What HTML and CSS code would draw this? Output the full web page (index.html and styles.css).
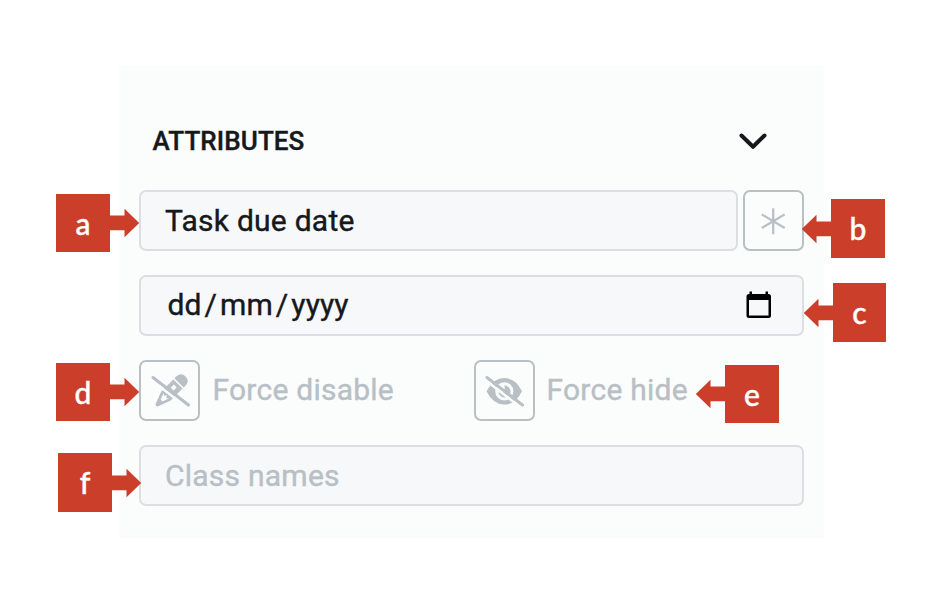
FILE: index.html
```
<!DOCTYPE html>
<html lang="en">
<head>
<meta charset="utf-8">
<title>Attributes</title>
<link rel="stylesheet" href="styles.css">
</head>
<body>
<section class="panel">
  <header class="panel-header">
    <h2>ATTRIBUTES</h2>
    <svg class="chevron" width="30" height="20" viewBox="0 0 30 20"><path d="M3.500 4.500 15 15.800 26.500 4.500"/></svg>
  </header>
  <div class="row label-row">
    <div class="field"><span class="t-label">Task due date</span></div>
    <div class="icon-button">
      <svg width="60" height="60" viewBox="0 0 60 60"><path class="thin" d="M29.200 17.200V43.200M17.800 23.400 40.700 37M40.700 23.400 17.800 37"/></svg>
    </div>
  </div>
  <div class="row">
    <div class="field date-field"><span class="t-date">dd<i>/</i>mm<i>/</i>yyyy</span>
      <svg class="calendar" width="26" height="28" viewBox="0 0 26 28"><path fill-rule="evenodd" d="M3.500 0.500H6V3H19.500V0.500H22V3H22.500Q25 3 25 5.500V24.500Q25 27 22.500 27H3Q.5 27 .5 24.500V5.500Q.5 3 3 3H3.500ZM3 9V24.500H22.500V9Z"/></svg>
    </div>
  </div>
  <div class="row toggles">
    <div class="toggle">
      <div class="icon-button">
        <svg width="60" height="60" viewBox="0 0 60 60">
          <g transform="translate(30.700 30.300) rotate(45)">
            <path class="solid" d="M-6.500-11.800V-14.500Q-6.500-21 0-21T6.500-14.500V-11.800Z"/>
            <path class="solid" fill-rule="evenodd" d="M-6.500-10.300H6.500V7L1.800 19.500Q0 22-1.800 19.500L-6.500 7ZM-2.500-7V-2.500H1.500V-7ZM-3.800 6-1.300 13H1.300L3.800 6 1.800 8 0 5.500-1.800 8Z"/>
          </g>
          <path class="gap" d="M11 18.700 46.800 46.500"/><path class="slash" d="M13 16.500 48.500 44"/>
        </svg>
      </div>
      <span class="t-disable">Force disable</span>
    </div>
    <div class="toggle">
      <div class="icon-button">
        <svg class="eye" width="60" height="60" viewBox="0 0 60 60">
          <path class="solid" fill-rule="evenodd" d="M12.500 30.300Q19 17 30.300 17T48 30.300Q41.600 43.600 30.300 43.600T12.500 30.300ZM30.300 21.200A9.100 9.100 0 1 0 30.300 39.400 9.100 9.100 0 1 0 30.300 21.200Z"/>
          <path class="solid" d="M30 24.500A6 6 0 1 1 24.500 31Q28.500 32.500 30 30 31.500 27 30 24.500Z"/>
          <path class="gap" d="M11 18.700 46.500 46.300"/><path class="slash" d="M13 16.500 48.500 44"/>
        </svg>
      </div>
      <span class="t-hide">Force hide</span>
    </div>
  </div>
  <div class="row"><div class="field muted"><span class="t-class">Class names</span></div></div>
</section>
<div class="callout a"><b>a</b><svg width="30" height="30" viewBox="0 0 30 30"><path d="M0 7.500H14.500V.8L29.200 15 14.500 29.200V22.300H0Z"/></svg></div>
<div class="callout left b"><b>b</b><svg width="30" height="30" viewBox="0 0 30 30"><path d="M0 7.500H14.500V.8L29.200 15 14.500 29.200V22.300H0Z"/></svg></div>
<div class="callout left c"><b>c</b><svg width="30" height="30" viewBox="0 0 30 30"><path d="M0 7.500H14.500V.8L29.200 15 14.500 29.200V22.300H0Z"/></svg></div>
<div class="callout d"><b>d</b><svg width="30" height="30" viewBox="0 0 30 30"><path d="M0 7.500H14.500V.8L29.200 15 14.500 29.200V22.300H0Z"/></svg></div>
<div class="callout left e"><b>e</b><svg width="30" height="30" viewBox="0 0 30 30"><path d="M0 7.500H14.500V.8L29.200 15 14.500 29.200V22.300H0Z"/></svg></div>
<div class="callout f"><b>f</b><svg width="30" height="30" viewBox="0 0 30 30"><path d="M0 7.500H14.500V.8L29.200 15 14.500 29.200V22.300H0Z"/></svg></div>
</body>
</html>
```
FILE: styles.css
```
* { box-sizing: border-box; }
body {
  margin: 0;
  padding: 66px 118px 0 119px;
  height: 616px;
  background: #fff;
  color: #15191c;
  font-family: Roboto, sans-serif;
  font-size: 30px;
  overflow: hidden;
}
svg { display: block; flex: none; }
.panel {
  height: 472px;
  padding: 54px 20px 0 20px;
  background: #fbfdfc;
}
.panel-header {
  display: flex;
  justify-content: space-between;
  align-items: center;
  height: 42px;
  margin-bottom: 28px;
  padding: 0 36.500px 0 13.500px;
}
.panel-header h2 {
  margin: 0;
  font-size: 26px;
  font-weight: 500;
  line-height: 42px;
  letter-spacing: .1px;
  -webkit-text-stroke: .4px currentColor;
}
.chevron path { fill: none; stroke: #15191c; stroke-width: 4; stroke-linecap: round; stroke-linejoin: round; }
.row { display: flex; gap: 5px; height: 61px; margin-bottom: 24px; }
.field {
  display: flex;
  align-items: center;
  flex: 1;
  padding: 0 30px 0 24px;
  background: #f7f8fa;
  border: 2px solid #dcdee1;
  border-radius: 7px;
}
.field span, .toggle span {
  white-space: nowrap;
  line-height: 40px;
  letter-spacing: .24px;
  -webkit-text-stroke: .4px currentColor;
}
.date-field { justify-content: space-between; padding-left: 26.500px; padding-bottom: 1px; }
.calendar { fill: #000; }
.field .t-date { letter-spacing: .1px; }
.t-date i { font-style: normal; margin: 0 3px; }
.icon-button {
  display: flex;
  align-items: center;
  justify-content: center;
  flex: none;
  width: 61px;
  height: 61px;
  border: 2px solid #b8bfc5;
  border-radius: 7px;
}
.toggles { gap: 0; color: #b8bfc5; }
.toggle { display: flex; flex: none; align-items: center; gap: 12.500px; width: 335px; }
.toggle + .toggle { width: auto; gap: 11.500px; }
.toggle span { padding-bottom: 1px; }
.eye { margin-left: -2px; }
.muted { color: #b8bfc5; }
.thin { fill: none; stroke: #b8bfc5; stroke-width: 2.200; }
.solid { fill: #b8bfc5; }
.gap { fill: none; stroke: #fbfdfc; stroke-width: 2.500; }
.slash { fill: none; stroke: #b8bfc5; stroke-width: 3; stroke-linecap: round; }
.callout {
  position: absolute;
  display: flex;
  align-items: center;
  color: #fff;
}
.callout b {
  width: 54px;
  height: 58px;
  background: #ca3e2a;
  font: 500 30px/58px Lato, sans-serif;
  text-align: center;
  -webkit-text-stroke: .4px currentColor;
}
.callout svg { fill: #ca3e2a; }
.left { flex-direction: row-reverse; }
.left svg { transform: scaleX(-1); }
.a { left: 56px; top: 194px; }
.b { left: 801px; top: 199px; }
.c { left: 803px; top: 283px; }
.d { left: 56px; top: 363px; }
.e { left: 695px; top: 365px; }
.f { left: 58px; top: 453px; }
.b b, .c b, .f b { height: 59px; }
.c b { width: 53px; }
```
